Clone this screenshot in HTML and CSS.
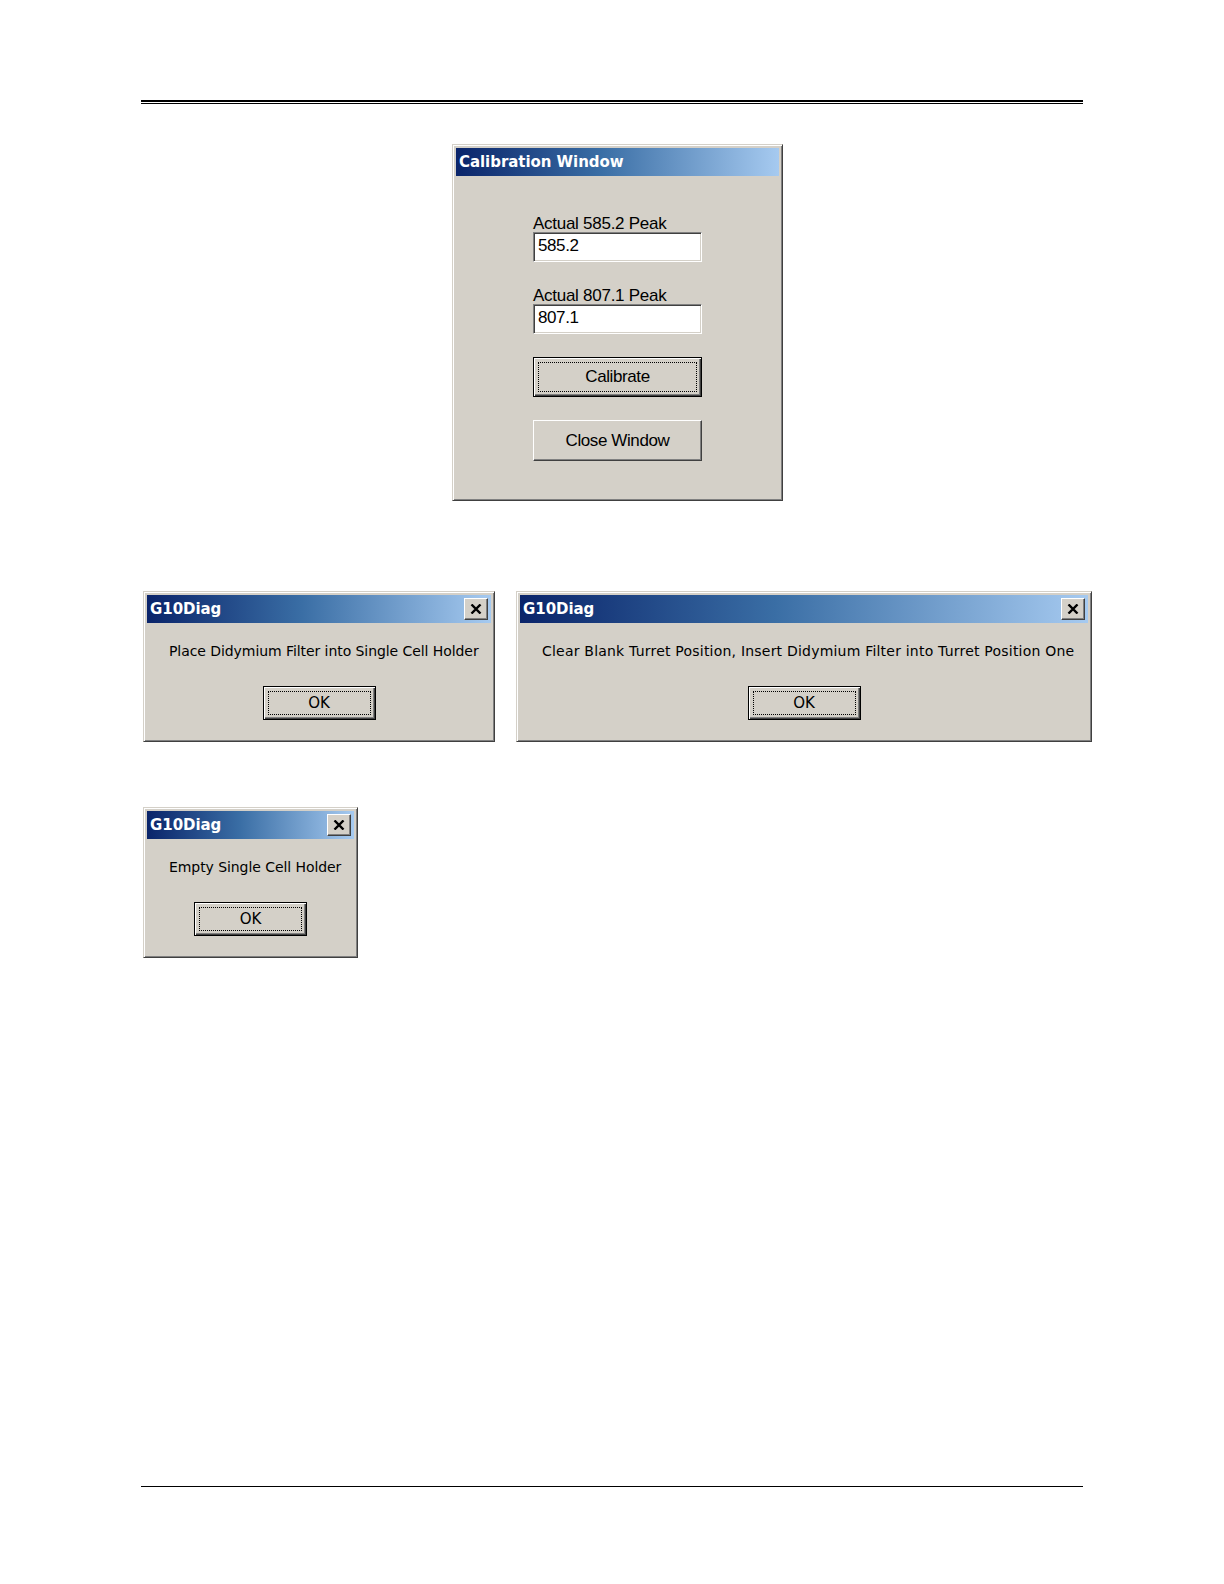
FILE: index.html
```html
<!DOCTYPE html>
<html>
<head>
<meta charset="utf-8">
<link rel="stylesheet" href="styles.css">
</head>
<body>
<div class="page">
  <div class="header-rule"></div>

  <div class="cal-row">
    <div class="win cal-win">
      <div class="titlebar"><span class="title">Calibration Window</span></div>
      <div class="cal-body">
        <label class="cal-label">Actual 585.2 Peak</label>
        <div class="field">585.2</div>
        <label class="cal-label second">Actual 807.1 Peak</label>
        <div class="field">807.1</div>
        <div class="btn default cal-btn first-btn"><span class="focus">Calibrate</span></div>
        <div class="btn cal-btn close-btn"><span class="plain">Close Window</span></div>
      </div>
    </div>
  </div>

  <div class="msg-row">
    <div class="win msg-win w1">
      <div class="titlebar"><span class="title">G10Diag</span><span class="xbtn"><svg width="12" height="10" viewBox="0 0 12 10"><path d="M1.5 0.5L10.5 9.5M10.5 0.5L1.5 9.5" stroke="#000" stroke-width="2.4" fill="none"/></svg></span></div>
      <div class="msg-body">
        <p class="msg">Place Didymium Filter into Single Cell Holder</p>
        <div class="btn default ok"><span class="focus">OK</span></div>
      </div>
    </div>
    <div class="win msg-win w2">
      <div class="titlebar"><span class="title">G10Diag</span><span class="xbtn"><svg width="12" height="10" viewBox="0 0 12 10"><path d="M1.5 0.5L10.5 9.5M10.5 0.5L1.5 9.5" stroke="#000" stroke-width="2.4" fill="none"/></svg></span></div>
      <div class="msg-body">
        <p class="msg wide">Clear Blank Turret Position, Insert Didymium Filter into Turret Position One</p>
        <div class="btn default ok"><span class="focus">OK</span></div>
      </div>
    </div>
  </div>

  <div class="msg-row third">
    <div class="win msg-win w3">
      <div class="titlebar"><span class="title">G10Diag</span><span class="xbtn"><svg width="12" height="10" viewBox="0 0 12 10"><path d="M1.5 0.5L10.5 9.5M10.5 0.5L1.5 9.5" stroke="#000" stroke-width="2.4" fill="none"/></svg></span></div>
      <div class="msg-body">
        <p class="msg">Empty Single Cell Holder</p>
        <div class="btn default ok"><span class="focus">OK</span></div>
      </div>
    </div>
  </div>

  <div class="footer-rule"></div>
</div>
</body>
</html>
```

FILE: styles.css
```css
html, body {
  margin: 0;
  padding: 0;
  background: #ffffff;
}

.page {
  width: 942px;
  margin-left: 141px;
  display: flex;
  flex-direction: column;
  font-family: "DejaVu Sans", sans-serif;
}

.header-rule {
  margin-top: 100px;
  height: 1px;
  border-top: 2px solid #000;
  border-bottom: 1px solid #000;
}

.cal-row {
  display: flex;
  justify-content: center;
  margin-top: 40px;
  padding-left: 11px;
}

.win {
  box-sizing: border-box;
  background: #d4d0c8;
  border: 1px solid;
  border-color: #d4d0c8 #404040 #404040 #d4d0c8;
  box-shadow: inset 1px 1px 0 #ffffff, inset -1px -1px 0 #808080;
  padding: 3px;
  display: flex;
  flex-direction: column;
  flex-shrink: 0;
}

.cal-win {
  width: 331px;
  height: 357px;
}

.titlebar {
  height: 28px;
  flex-shrink: 0;
  background: linear-gradient(to right, #0a246a 0%, #3a6ea5 45%, #a6caf0 100%);
  display: flex;
  align-items: center;
  justify-content: space-between;
  padding: 0 3px 0 3px;
}

.title {
  color: #ffffff;
  font-family: "DejaVu Sans", sans-serif;
  font-weight: bold;
  font-size: 15px;
  letter-spacing: -0.05px;
}

.cal-body {
  display: flex;
  flex-direction: column;
  align-self: center;
  width: 169px;
  padding-top: 38px;
  font-family: "Liberation Sans", sans-serif;
}

.cal-label {
  font-size: 17px;
  line-height: 20px;
  height: 18px;
  color: #000;
  letter-spacing: -0.27px;
}

.cal-label.second {
  margin-top: 24px;
}

.field {
  box-sizing: border-box;
  height: 30px;
  background: #ffffff;
  border: 1px solid;
  border-color: #808080 #ffffff #ffffff #808080;
  box-shadow: inset 1px 1px 0 #404040, inset -1px -1px 0 #d4d0c8;
  padding: 3px 4px 0 4px;
  font-size: 17px;
  line-height: 20px;
  letter-spacing: -0.4px;
  color: #000;
}

.btn {
  box-sizing: border-box;
  background: #d4d0c8;
  border: 1px solid;
  border-color: #ffffff #404040 #404040 #ffffff;
  box-shadow: inset -1px -1px 0 #808080;
  display: flex;
  align-items: center;
  justify-content: center;
  color: #000;
}

.btn.default {
  border: 1px solid #000;
  box-shadow: inset 1px 1px 0 #ffffff, inset -1px -1px 0 #404040, inset -2px -2px 0 #808080;
  padding: 4px;
}

.focus {
  flex: 1;
  align-self: stretch;
  border: 1px dotted #000;
  display: flex;
  align-items: center;
  justify-content: center;
}

.cal-btn {
  height: 40px;
  flex-shrink: 0;
  font-size: 17px;
  letter-spacing: -0.4px;
}

.first-btn {
  margin-top: 23px;
}

.close-btn {
  margin-top: 23px;
  height: 41px;
}

.msg-row {
  display: flex;
  gap: 21px;
  margin-top: 90px;
  padding-left: 2px;
}

.msg-row.third {
  margin-top: 65px;
}

.msg-win {
  height: 151px;
}

.w1 { width: 352px; }
.w2 { width: 576px; }
.w3 { width: 215px; }

.xbtn {
  box-sizing: border-box;
  width: 24px;
  height: 22px;
  background: #d4d0c8;
  border: 1px solid;
  border-color: #ffffff #404040 #404040 #ffffff;
  box-shadow: inset -1px -1px 0 #808080;
  display: flex;
  align-items: center;
  justify-content: center;
}

.msg-body {
  display: flex;
  flex-direction: column;
  align-items: center;
}

.msg {
  align-self: stretch;
  margin: 19px 0 0 0;
  padding: 0 10px 0 22px;
  font-size: 14px;
  line-height: 18px;
  height: 18px;
  white-space: nowrap;
  color: #000;
  letter-spacing: -0.07px;
}

.msg.wide {
  letter-spacing: 0.21px;
}

.ok {
  margin-top: 26px;
  width: 113px;
  height: 34px;
  font-size: 15px;
}

.footer-rule {
  margin-top: 528px;
  height: 1px;
  background: #000;
}
```
